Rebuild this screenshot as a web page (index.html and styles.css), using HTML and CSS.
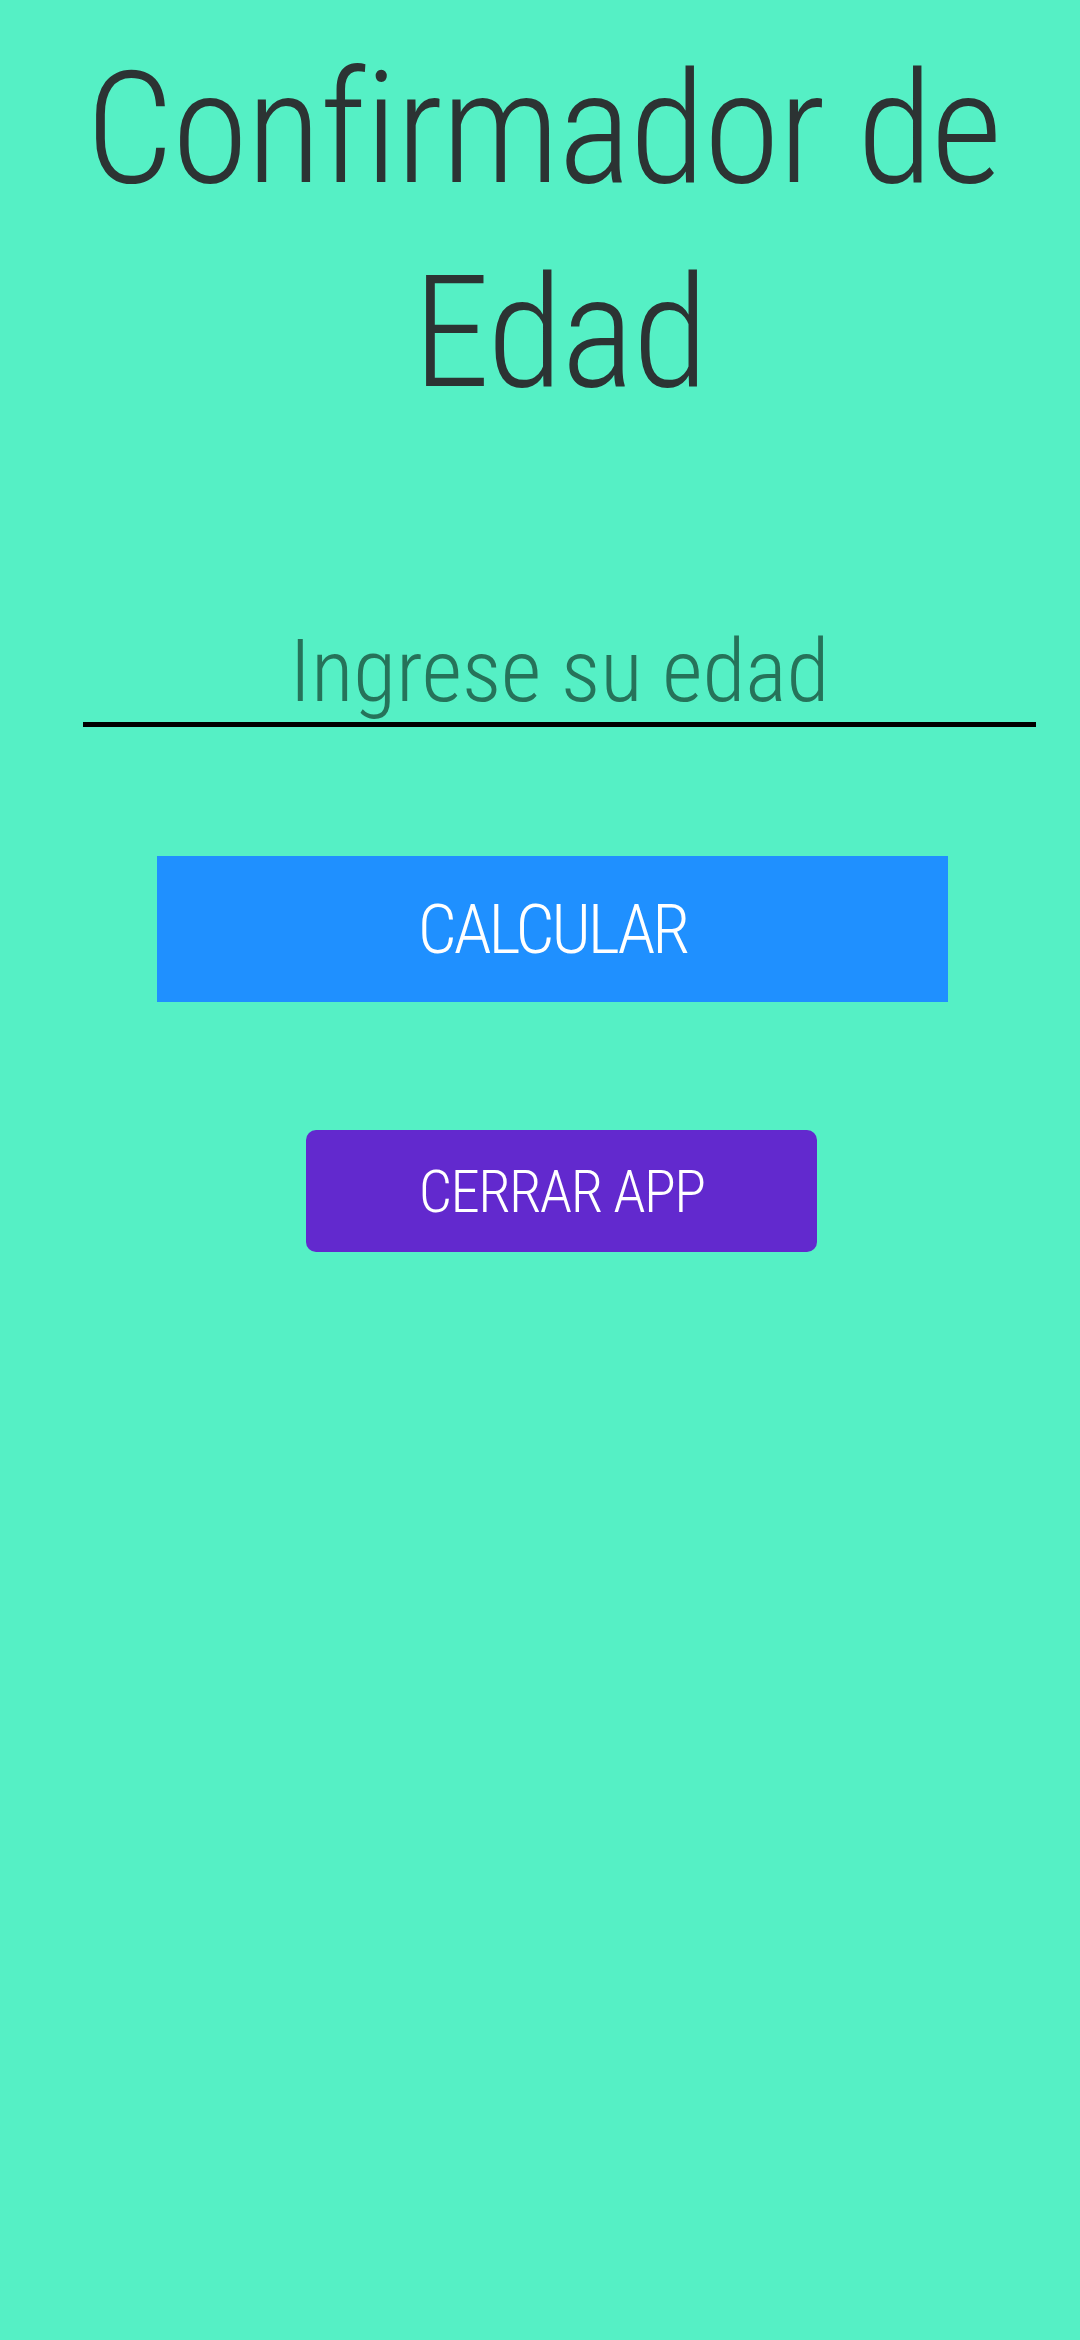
FILE: index.html
```html
<!DOCTYPE html>
<html lang="es">
<head>
<meta charset="utf-8">
<title>Confirmador de Edad</title>
<link rel="stylesheet" href="styles.css">
</head>
<body>
<main class="screen">
  <h1 class="title">Confirmador de Edad</h1>
  <div class="field">
    <input class="age-input" type="text" placeholder="Ingrese su edad">
  </div>
  <button class="btn btn-calc" type="button">CALCULAR</button>
  <button class="btn btn-close" type="button">CERRAR APP</button>
</main>
</body>
</html>
```
FILE: styles.css
```css
html, body {
  margin: 0;
  padding: 0;
}
body {
  background: #55f0c5;
  font-family: "Roboto Condensed", "DejaVu Sans Condensed", sans-serif;
  font-weight: 300;
}
.screen {
  display: flex;
  flex-direction: column;
  align-items: flex-start;
  min-height: 2340px;
}
.title {
  box-sizing: border-box;
  width: 1080px;
  margin: 27px 0 0;
  padding-left: 40px;
  font-size: 155px;
  line-height: 204px;
  font-weight: 300;
  letter-spacing: -1.5px;
  white-space: break-spaces;
  color: #2c3333;
  text-align: center;
}
.field {
  margin: 185px 0 0 83px;
  width: 953px;
  border-bottom: 5px solid #000;
}
.age-input {
  display: block;
  width: 100%;
  height: 102px;
  box-sizing: border-box;
  border: 0;
  outline: none;
  background: transparent;
  font: inherit;
  font-size: 88px;
  line-height: 100px;
  letter-spacing: -0.1px;
  text-align: center;
  padding: 0 0 2px;
}
.age-input::placeholder {
  color: #26735a;
  opacity: 1;
}
.btn {
  border: 0;
  color: #fff;
  font-family: inherit;
  font-weight: 300;
  padding: 0;
}
.btn-calc {
  margin: 129px 0 0 157px;
  width: 791px;
  height: 146px;
  background: #1f90ff;
  font-size: 69px;
  letter-spacing: -3px;
}
.btn-close {
  margin: 128px 0 0 306px;
  width: 511px;
  height: 122px;
  border-radius: 10px;
  background: #6229ce;
  font-size: 59px;
  letter-spacing: -1.6px;
}
```
